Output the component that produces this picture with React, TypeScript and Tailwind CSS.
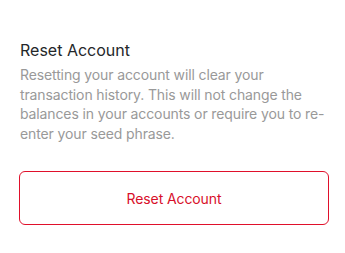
export default function App() {
  return (
    <div className="w-[345px] h-[253px] bg-white pl-[19px] pr-[14px] pt-[38px] font-['Inter',sans-serif]">
      <div className="pl-px text-[16px] leading-6 text-[#24272a]">Reset Account</div>
      <div className="mt-[3px] pl-px text-[14px] leading-[19.5px] tracking-[-0.12px] text-[#999999]">
        Resetting your account will clear your transaction history. This will not change the balances in your accounts or require you to re-enter your seed phrase.
      </div>
      <button className="mt-[28px] flex h-[54px] w-[310px] items-center justify-center rounded-md border border-[#e0102b] bg-white text-[14px] tracking-[-0.1px] text-[#d80f2a]">
        Reset Account
      </button>
    </div>
  );
}
